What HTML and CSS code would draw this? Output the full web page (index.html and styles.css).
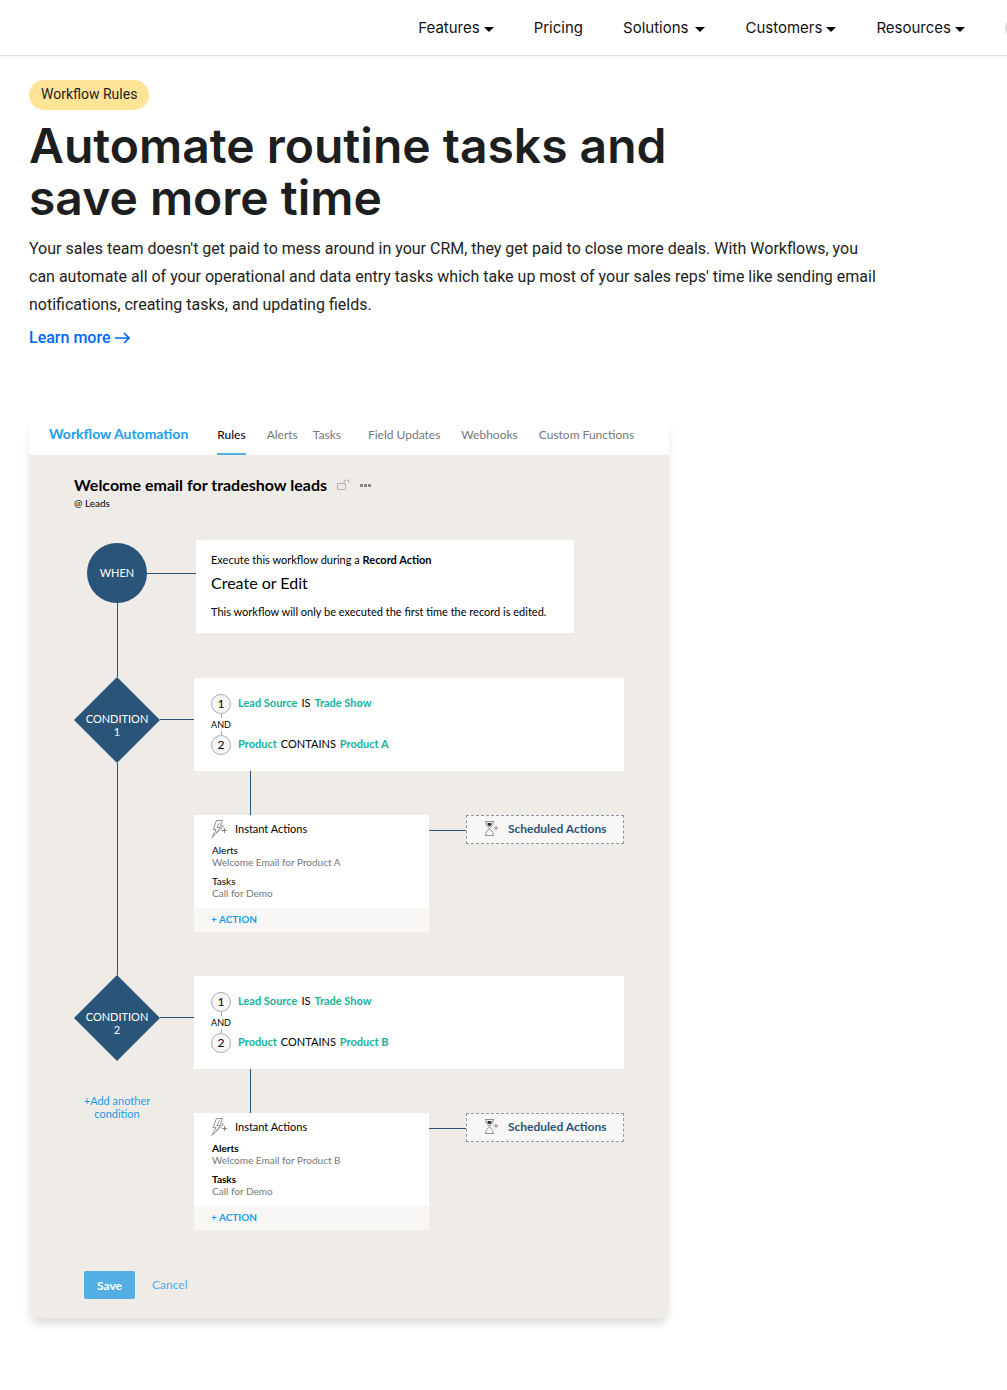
FILE: index.html
```html
<!DOCTYPE html>
<html lang="en">
<head>
<meta charset="utf-8">
<meta name="viewport" content="width=device-width, initial-scale=1">
<title>Workflow Rules</title>
<link rel="stylesheet" href="styles.css">
</head>
<body>
<svg width="0" height="0" class="sprite" aria-hidden="true">
  <symbol id="bolt" viewBox="0 0 17 18">
    <path d="M5.500.5h6L9.500 6h3L1 17.500 5 9.500H2.200zM8.500 2.500 6 7.500h3.500L5 13" fill="none" stroke="#777" stroke-width=".8"/>
    <path d="M11 10.500h5M13.500 8v5" stroke="#777" stroke-width=".9"/>
  </symbol>
  <symbol id="hourglass" viewBox="0 0 15 15">
    <path d="M1 .5h9M1 14.500h9M2 .5v3l3.500 4L2 11.500v3M9 .5v3l-3.500 4 3.500 4v3" fill="none" stroke="#888" stroke-width=".9"/>
    <path d="M3.500 2h4v2l-2 1.500-2-1.500z" fill="#333"/>
    <path d="M9.500 7h5M12 4.500v5" stroke="#888" stroke-width=".9"/>
  </symbol>
</svg>

<header class="site-header">
  <nav class="site-nav" aria-label="Main">
    <a class="site-nav__link site-nav__link--menu" href="#features">Features</a>
    <a class="site-nav__link" href="#pricing">Pricing</a>
    <a class="site-nav__link site-nav__link--menu site-nav__link--wide" href="#solutions">Solutions</a>
    <a class="site-nav__link site-nav__link--menu" href="#customers">Customers</a>
    <a class="site-nav__link site-nav__link--menu" href="#resources">Resources</a>
    <button class="site-nav__search" type="button" aria-label="Search"></button>
  </nav>
</header>

<main class="page">
  <section class="intro">
    <span class="badge">Workflow Rules</span>
    <h1 class="intro__title">Automate routine tasks and save more time</h1>
    <p class="intro__text">Your sales team doesn't get paid to mess around in your CRM, they get paid to close more deals. With Workflows, you can automate all of your operational and data entry tasks which take up most of your sales reps' time like sending email notifications, creating tasks, and updating fields.</p>
    <a class="intro__more" href="#learn-more">Learn more
      <svg width="15" height="12" viewBox="0 0 15 12" aria-hidden="true"><path d="M0 6h14M9 1l5 5-5 5" fill="none" stroke="currentColor" stroke-width="1.600"/></svg>
    </a>
  </section>

  <section class="mock">
    <header class="mock__bar">
      <strong class="mock__brand">Workflow Automation</strong>
      <nav class="tabs" aria-label="Automation">
        <a class="tab tab--on" href="#rules">Rules</a>
        <span class="tabs__pair">
          <a class="tab" href="#alerts">Alerts</a>
          <a class="tab" href="#tasks">Tasks</a>
        </span>
        <a class="tab" href="#field-updates">Field Updates</a>
        <a class="tab" href="#webhooks">Webhooks</a>
        <a class="tab" href="#functions">Custom Functions</a>
      </nav>
    </header>

    <div class="mock__body">
      <div class="rule-head">
        <h2 class="rule-head__title">Welcome email for tradeshow leads</h2>
        <svg width="13" height="12" viewBox="0 0 13 12" aria-hidden="true"><path d="M.5 4.500h8v6h-8zM7 4.500V3q0-2 2.500-2T12 3v1" fill="none" stroke="#b0b0b0"/></svg>
        <svg width="11" height="3" viewBox="0 0 11 3" aria-hidden="true"><path d="M0 0h3v3H0zM4 0h3v3H4zM8 0h3v3H8z" fill="#888"/></svg>
      </div>
      <p class="rule-head__module">@ Leads</p>

      <div class="step">
        <div class="rail">
          <div class="rail__head"><div class="circle">WHEN</div></div>
          <div class="rail__line"></div>
        </div>
        <div class="connector connector--when"></div>
        <div class="trigger">
          <p>Execute this workflow during a <b>Record Action</b></p>
          <h3 class="trigger__event">Create or Edit</h3>
          <p>This workflow will only be executed the first time the record is edited.</p>
        </div>
      </div>

      <div class="step">
        <div class="rail">
          <div class="diamond">CONDITION<br>1</div>
          <div class="rail__line"></div>
        </div>
        <div class="connector"></div>
        <div class="branch">
          <div class="criteria">
            <div class="criterion"><span class="num">1</span><p><b>Lead Source</b><span>IS</span><b>Trade Show</b></p></div>
            <div class="criteria__join">AND</div>
            <div class="criterion"><span class="num">2</span><p><b>Product</b><span>CONTAINS</span><b>Product A</b></p></div>
          </div>
          <div class="stem"></div>
          <div class="outcome">
            <div class="actions">
              <h3 class="actions__title"><svg width="17" height="18" aria-hidden="true"><use href="#bolt"/></svg><span>Instant Actions</span></h3>
              <dl class="actions__list">
                <dt>Alerts</dt><dd>Welcome Email for Product A</dd>
                <dt>Tasks</dt><dd>Call for Demo</dd>
              </dl>
              <button class="actions__add" type="button">+ ACTION</button>
            </div>
            <div class="link-line"></div>
            <button class="scheduled" type="button"><svg width="15" height="15" aria-hidden="true"><use href="#hourglass"/></svg>Scheduled Actions</button>
          </div>
        </div>
      </div>

      <div class="step">
        <div class="rail">
          <div class="diamond">CONDITION<br>2</div>
          <a class="rail__add" href="#add-condition">+Add another condition</a>
        </div>
        <div class="connector"></div>
        <div class="branch">
          <div class="criteria">
            <div class="criterion"><span class="num">1</span><p><b>Lead Source</b><span>IS</span><b>Trade Show</b></p></div>
            <div class="criteria__join">AND</div>
            <div class="criterion"><span class="num">2</span><p><b>Product</b><span>CONTAINS</span><b>Product B</b></p></div>
          </div>
          <div class="stem"></div>
          <div class="outcome">
            <div class="actions">
              <h3 class="actions__title"><svg width="17" height="18" aria-hidden="true"><use href="#bolt"/></svg><span>Instant Actions</span></h3>
              <dl class="actions__list actions__list--strong">
                <dt>Alerts</dt><dd>Welcome Email for Product B</dd>
                <dt>Tasks</dt><dd>Call for Demo</dd>
              </dl>
              <button class="actions__add" type="button">+ ACTION</button>
            </div>
            <div class="link-line"></div>
            <button class="scheduled" type="button"><svg width="15" height="15" aria-hidden="true"><use href="#hourglass"/></svg>Scheduled Actions</button>
          </div>
        </div>
      </div>

      <div class="form-actions">
        <button class="save" type="button">Save</button>
        <a class="cancel" href="#cancel">Cancel</a>
      </div>
    </div>
  </section>
</main>
</body>
</html>
```
FILE: styles.css
```css
* { box-sizing: border-box; }

body {
  margin: 0;
  background: #fff;
  color: #1d1e20;
  font-family: Roboto, sans-serif;
  font-size: 16px;
}

h1, h2, h3, p, dl, dd { margin: 0; }
a { text-decoration: none; }
button { border: 0; font-family: inherit; cursor: pointer; }
.sprite { display: block; }

/* Site header */
.site-header {
  height: 56px;
  border-bottom: 1px solid #e0e0e0;
  box-shadow: 0 1px 2px #f3f3f3;
  overflow: hidden;
}

.site-nav {
  display: flex;
  justify-content: flex-end;
  align-items: center;
  gap: 40px;
  height: 55px;
  margin-right: -18px;
}

.site-nav__link {
  display: flex;
  align-items: center;
  gap: 4px;
  color: #111;
  font-family: Inter, sans-serif;
  font-size: 15px;
  line-height: 20px;
}

.site-nav__link--wide { gap: 7px; }

.site-nav__link--menu::after {
  content: "";
  margin-top: 4px;
  border: 5px solid transparent;
  border-top-color: #000;
  border-bottom: 0;
}

.site-nav__search {
  width: 20px;
  height: 20px;
  padding: 0;
  border: 2px solid #d5dde0;
  border-radius: 50%;
  background: #fff;
}

/* Intro */
.page { padding: 24px 29px 64px; }
.intro { max-width: 850px; }

.badge {
  display: inline-block;
  padding: 0 12px 2px;
  border-radius: 15px;
  background: #ffe498;
  font-size: 14px;
  line-height: 28px;
}

.intro__title {
  max-width: 680px;
  margin-top: 10px;
  font-family: Inter, sans-serif;
  font-size: 48px;
  font-weight: 600;
  line-height: 52px;
}

.intro__text { margin-top: 11px; line-height: 28px; }

.intro__more {
  display: inline-flex;
  align-items: center;
  gap: 5px;
  margin-top: 5px;
  color: #0066ff;
  font-weight: 500;
  line-height: 28px;
}

/* Workflow card */
.mock {
  max-width: 640px;
  margin-top: 63px;
  border-radius: 10px;
  box-shadow: 0 8px 10px -2px rgba(0, 0, 0, .14);
  overflow: hidden;
  color: #000;
  font-family: Lato, sans-serif;
  font-size: 11px;
}

.mock__bar {
  display: flex;
  align-items: flex-end;
  height: 40px;
  padding-left: 20px;
  gap: 29px;
  background: #fff;
}

.mock__brand { color: #1a9eed; font-size: 14px; line-height: 42px; }
.tabs, .tabs__pair { display: flex; }
.tabs { gap: 21px; }
.tabs__pair { gap: 15px; padding-right: 6px; }

.tab {
  padding-bottom: 8px;
  border-bottom: 2px solid transparent;
  color: #777;
  font-size: 12px;
  line-height: 20px;
}

.tab--on { border-color: #53aee4; color: #000; }

.mock__body {
  padding: 19px 45px 19px;
  background: #efebe6;
}

.rule-head { display: flex; align-items: center; gap: 10px; }
.rule-head__title { font-size: 16px; line-height: 22px; }
.rule-head__module { margin-bottom: 30px; font-size: 10px; line-height: 14px; }

.step {
  display: grid;
  grid-template-columns: 86px 34px 1fr;
}

.rail { display: flex; flex-direction: column; align-items: center; }

.rail__head {
  display: grid;
  grid-template-columns: 1fr 60px 1fr;
  align-items: center;
  align-self: stretch;
  padding-top: 3px;
}

.rail__head::after { content: ""; height: 1px; background: #2a5478; }

.circle {
  grid-column: 2;
  border-radius: 50%;
  background: #2a5478;
  color: #fff;
  font-size: 11px;
  line-height: 60px;
  text-align: center;
}

.rail__line { flex: 1; width: 1px; background: #2a5478; }

.diamond {
  width: 86px;
  height: 86px;
  padding-top: 35px;
  background: #2a5478;
  clip-path: polygon(50% 0, 100% 50%, 50% 100%, 0 50%);
  color: #fff;
  font-size: 11px;
  line-height: 13px;
  text-align: center;
}

.rail__add {
  margin-top: 33px;
  color: #1a9eed;
  font-size: 11px;
  line-height: 13px;
  text-align: center;
}

.connector { height: 1px; margin-top: 42px; background: #2a5478; }
.connector--when { margin: 33px -2px 0 0; }

.trigger {
  width: 88%;
  min-height: 93px;
  margin: 0 0 44px 2px;
  padding: 12px 15px;
  background: #fff;
  line-height: 16px;
}

.trigger__event {
  margin: 5px 0 11px;
  font-size: 16px;
  font-weight: 400;
  line-height: 20px;
}

.branch { padding-top: 1px; padding-bottom: 43px; }
.step:nth-last-child(2) .branch { padding-bottom: 41px; }

.criteria { height: 93px; padding: 16px 17px; background: #fff; }
.criterion { display: flex; align-items: center; gap: 7px; }
.criterion p { display: flex; gap: 4px; padding-bottom: 2px; font-size: 11px; line-height: 18px; }
.criterion b { color: #17b198; font-weight: 700; }

.num {
  width: 20px;
  height: 20px;
  border: 1px solid #aaa;
  border-radius: 50%;
  background: #f8f7f5;
  font-size: 12px;
  line-height: 18px;
  text-align: center;
}

.criteria__join {
  display: flex;
  flex-direction: column;
  align-items: center;
  width: 20px;
  height: 21px;
  font-size: 9px;
  line-height: 13px;
}

.criteria__join::before, .criteria__join::after {
  content: "";
  width: 1px;
  height: 4px;
  background: #aaa;
}

.stem { width: 1px; height: 44px; margin-left: 56px; background: #2a5478; }

.outcome {
  display: grid;
  grid-template-columns: 235fr 37fr 158fr;
  align-items: start;
}

.actions { background: #fff; }

.actions__title {
  display: flex;
  align-items: center;
  gap: 7px;
  height: 28px;
  padding-left: 17px;
  font-size: 11px;
  font-weight: 400;
}

.actions__title span { padding-bottom: 2px; }

.actions__list { height: 65px; padding: 1px 18px; font-size: 10px; line-height: 12px; }
.actions__list dd { margin-bottom: 7px; color: #777; }
.actions__list--strong dt { font-weight: 700; }

.actions__add {
  display: block;
  width: 100%;
  padding: 0 17px 2px;
  background: #f8f7f5;
  color: #1a9eed;
  font-size: 10px;
  font-weight: 700;
  line-height: 22px;
  text-align: left;
}

.link-line { height: 1px; margin-top: 15px; background: #2a5478; }

.scheduled {
  display: flex;
  align-items: center;
  gap: 9px;
  height: 29px;
  padding: 0 0 2px 17px;
  border: 1px dashed #8d9ba8;
  background: #f8f7f5;
  color: #2a5478;
  font-size: 12px;
  font-weight: 700;
  white-space: nowrap;
}

.form-actions { display: flex; align-items: center; gap: 17px; padding-left: 10px; }

.save {
  width: 51px;
  height: 28px;
  padding: 0;
  border-radius: 2px;
  background: #53aee4;
  color: #fff;
  font-size: 12px;
  font-weight: 700;
}

.cancel { padding-bottom: 2px; color: #53aee4; font-size: 12px; }
```
